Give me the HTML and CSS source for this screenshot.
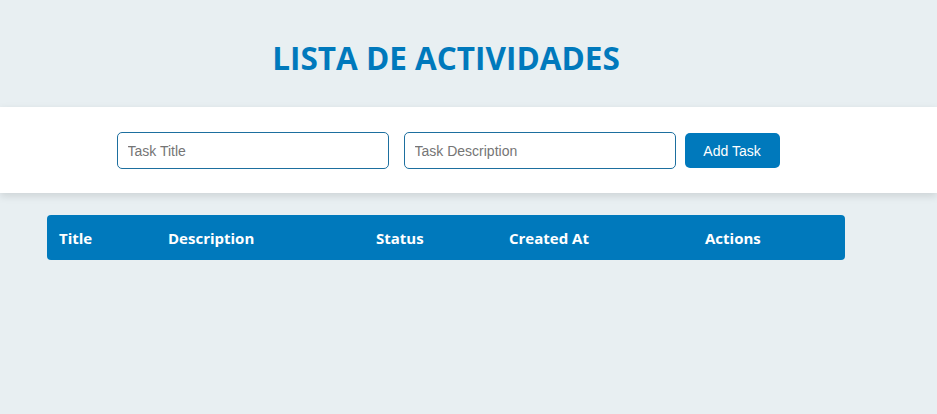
FILE: index.html
```html
<!DOCTYPE html>
<html lang="es">
<head>
<meta charset="utf-8">
<title>Lista de actividades</title>
<link rel="stylesheet" href="styles.css">
</head>
<body>
  <header class="page-header">
    <h1 class="title">LISTA DE ACTIVIDADES</h1>
  </header>
  <section class="form-band">
    <form class="task-form">
      <input class="field" type="text" placeholder="Task Title">
      <input class="field" type="text" placeholder="Task Description">
      <button class="add-btn" type="button">Add Task</button>
    </form>
  </section>
  <main class="content">
    <div class="table-head">
      <div class="col col-title">Title</div>
      <div class="col col-desc">Description</div>
      <div class="col col-status">Status</div>
      <div class="col col-created">Created At</div>
      <div class="col col-actions">Actions</div>
    </div>
  </main>
</body>
</html>
```
FILE: styles.css
```css
* { box-sizing: border-box; }
html, body { margin: 0; padding: 0; }
body {
  background: #e8eff2;
  font-family: "Open Sans", "Liberation Sans", sans-serif;
  width: 937px;
  height: 414px;
  overflow: hidden;
}
.page-header {
  width: 798px;
  margin-left: 47px;
  padding-top: 36px;
  height: 107px;
  display: flex;
  justify-content: center;
}
.title {
  margin: 0;
  color: #0079bc;
  font-size: 31.5px;
  font-weight: 700;
  line-height: 44px;
}
.form-band {
  background: #ffffff;
  height: 86px;
  box-shadow: 0 3px 8px rgba(0, 0, 0, 0.12);
  display: flex;
  align-items: center;
  padding-top: 1px;
}
.task-form {
  width: 798px;
  margin-left: 47px;
  display: flex;
  justify-content: center;
  align-items: center;
  padding-left: 4px;
}
.field {
  width: 272px;
  height: 37px;
  border: 1px solid #1d6f9f;
  border-radius: 5px;
  padding: 0 10px;
  font-family: "Liberation Sans", Arial, sans-serif;
  font-size: 14px;
  color: #333;
  margin-right: 15px;
  outline: none;
}
.field + .field { margin-right: 9px; }
.field::placeholder { color: #757575; }
.add-btn {
  width: 95px;
  height: 35px;
  background: #0079bc;
  color: #ffffff;
  border: none;
  border-radius: 5px;
  font-family: "Liberation Sans", Arial, sans-serif;
  font-size: 14px;
  cursor: pointer;
}
.content {
  padding: 22px 0 0 47px;
}
.table-head {
  width: 798px;
  height: 45px;
  background: #0079bc;
  border-radius: 4px;
  display: grid;
  grid-template-columns: 109px 208px 133px 196px 152px;
  align-items: center;
  color: #ffffff;
  font-weight: 700;
  font-size: 15px;
}
.col { padding-left: 12px; }
```
